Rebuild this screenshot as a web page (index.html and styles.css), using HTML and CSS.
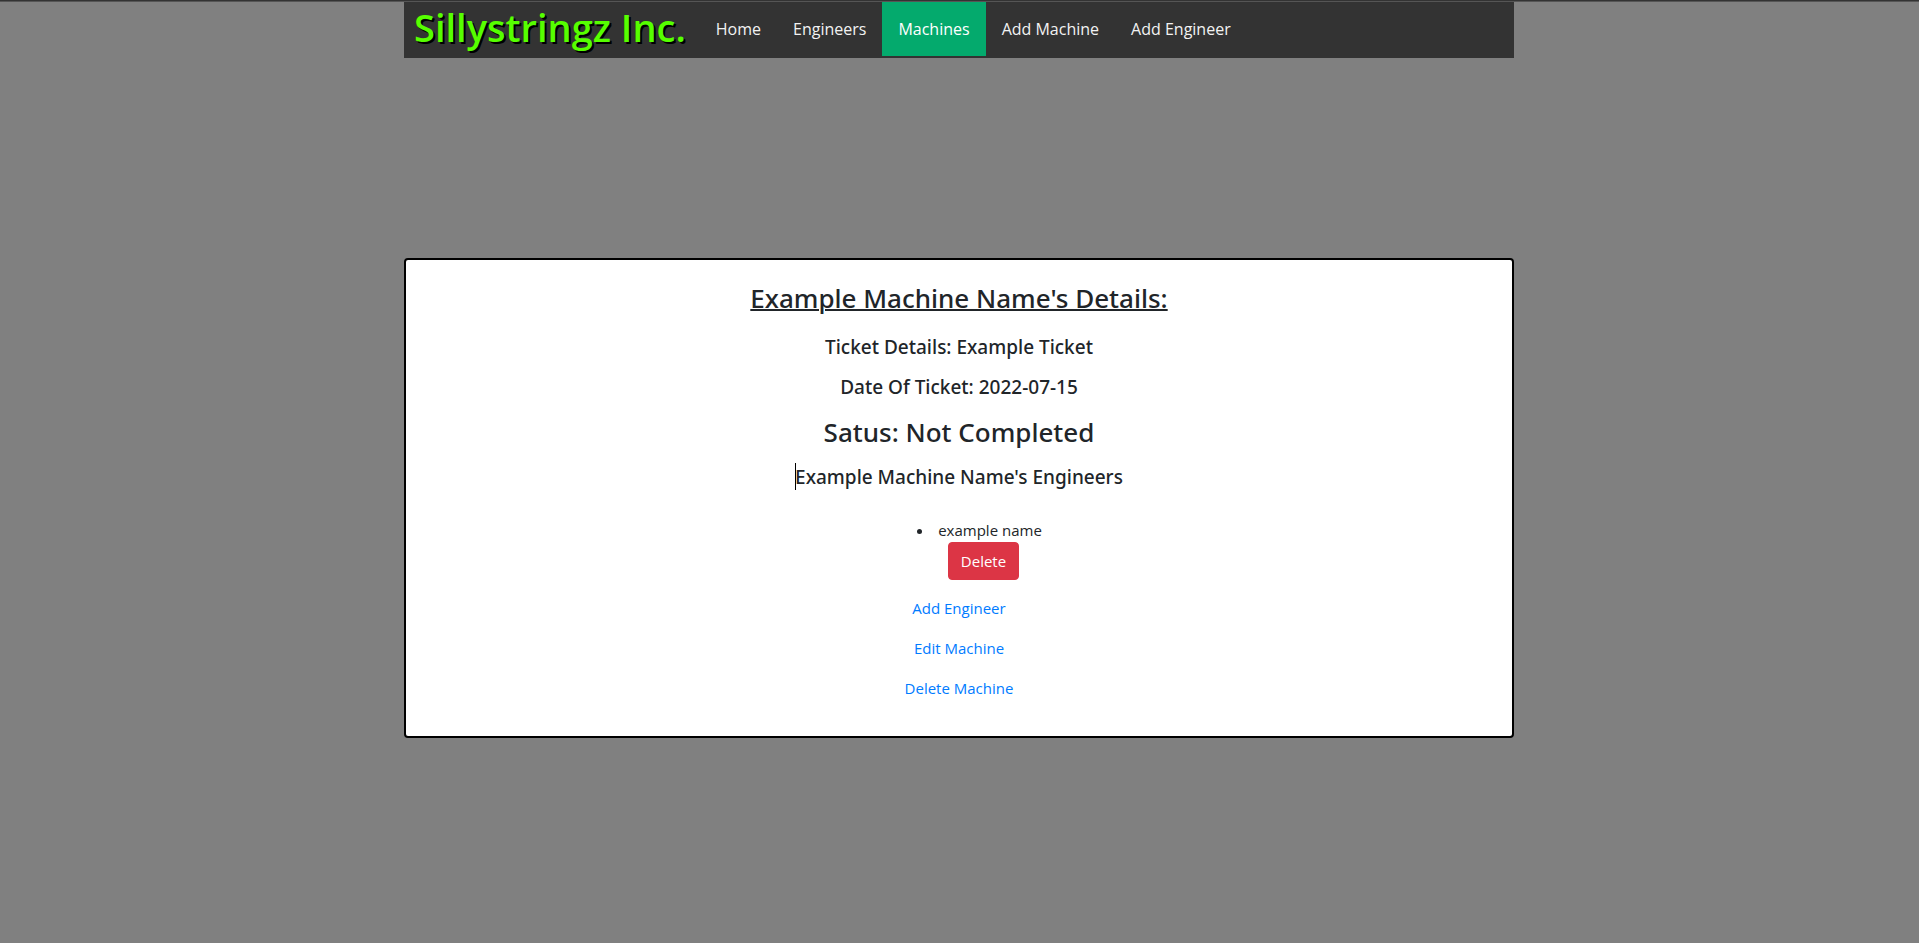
FILE: index.html
```html
<!DOCTYPE html>
<html lang="en">
<head>
<meta charset="utf-8">
<title>Sillystringz Inc.</title>
<link rel="stylesheet" href="styles.css">
</head>
<body>
<div class="container">
  <nav class="topnav">
    <a class="brand" href="#">Sillystringz Inc.</a>
    <a class="nav-link" href="#">Home</a>
    <a class="nav-link" href="#">Engineers</a>
    <a class="nav-link active" href="#">Machines</a>
    <a class="nav-link" href="#">Add Machine</a>
    <a class="nav-link" href="#">Add Engineer</a>
  </nav>
  <main class="card">
    <h3 class="title">Example Machine Name's Details:</h3>
    <h5 class="detail">Ticket Details: Example Ticket</h5>
    <h5 class="detail">Date Of Ticket: 2022-07-15</h5>
    <h3 class="status">Satus: Not Completed</h3>
    <h5 class="detail"><span class="caret">Example Machine Name's Engineers</span></h5>
    <ul class="engineers">
      <li>example name
        <form class="remove"><button class="btn-danger" type="button">Delete</button></form>
      </li>
    </ul>
    <p class="action"><a href="#">Add Engineer</a></p>
    <p class="action"><a href="#">Edit Machine</a></p>
    <p class="action"><a href="#">Delete Machine</a></p>
  </main>
</div>
</body>
</html>
```
FILE: styles.css
```css
* { box-sizing: border-box; }
body {
  margin: 0;
  border-top: 1px solid #333;
  background: #808080;
  color: #212529;
  font: 400 15px/24px "Open Sans", "Noto Sans", sans-serif;
}
body::before {
  content: "";
  display: block;
  height: 1px;
  background: #555;
}
.container {
  max-width: 1111px;
  margin: 0 auto;
  padding-right: 1px;
}
.topnav {
  display: flex;
  align-items: flex-start;
  height: 56px;
  background: #333;
}
.topnav a { text-decoration: none; }
.brand {
  padding: 0 14px 0 10px;
  color: #56ff00;
  font-size: 38px;
  line-height: 51px;
  font-weight: 600;
  text-shadow: 2px 2px #000;
  white-space: nowrap;
}
.nav-link {
  padding: 15px 16px;
  color: #f2f2f2;
  font-size: 16px;
  white-space: nowrap;
}
.nav-link.active {
  background: #04aa6d;
  color: #fff;
}
.card {
  margin-top: 200px;
  padding: 21px 20px 36px;
  border: 2px solid #000;
  border-radius: 4px;
  background: #fff;
  text-align: center;
}
h3, h5 {
  font-family: "Noto Sans", "Open Sans", sans-serif;
  font-weight: 500;
}
.title, .status {
  margin: 0 0 16px;
  font-size: 26px;
  line-height: 34px;
}
.title {
  margin-bottom: 20px;
  text-decoration: underline;
  text-decoration-thickness: 2px;
}
.detail {
  margin: 0 0 16px;
  font-size: 19px;
  line-height: 24px;
}
.caret { position: relative; }
.caret::before {
  content: "";
  position: absolute;
  left: 0;
  bottom: 0;
  width: 1px;
  height: 27px;
  background: #000;
}
.engineers {
  margin: 29px 0 16px;
  padding-left: 41px;
  list-style-position: inside;
}
.remove { margin: 0 0 0 8px; }
.btn-danger {
  display: block;
  margin: 0 auto;
  padding: 6px 12px;
  border: 1px solid #dc3545;
  border-radius: 4px;
  background: #dc3545;
  color: #fff;
  font: inherit;
}
.action { margin: 0 0 16px; }
.action:last-child { margin-bottom: 0; }
.action a {
  color: #007bff;
  text-decoration: none;
}
```
